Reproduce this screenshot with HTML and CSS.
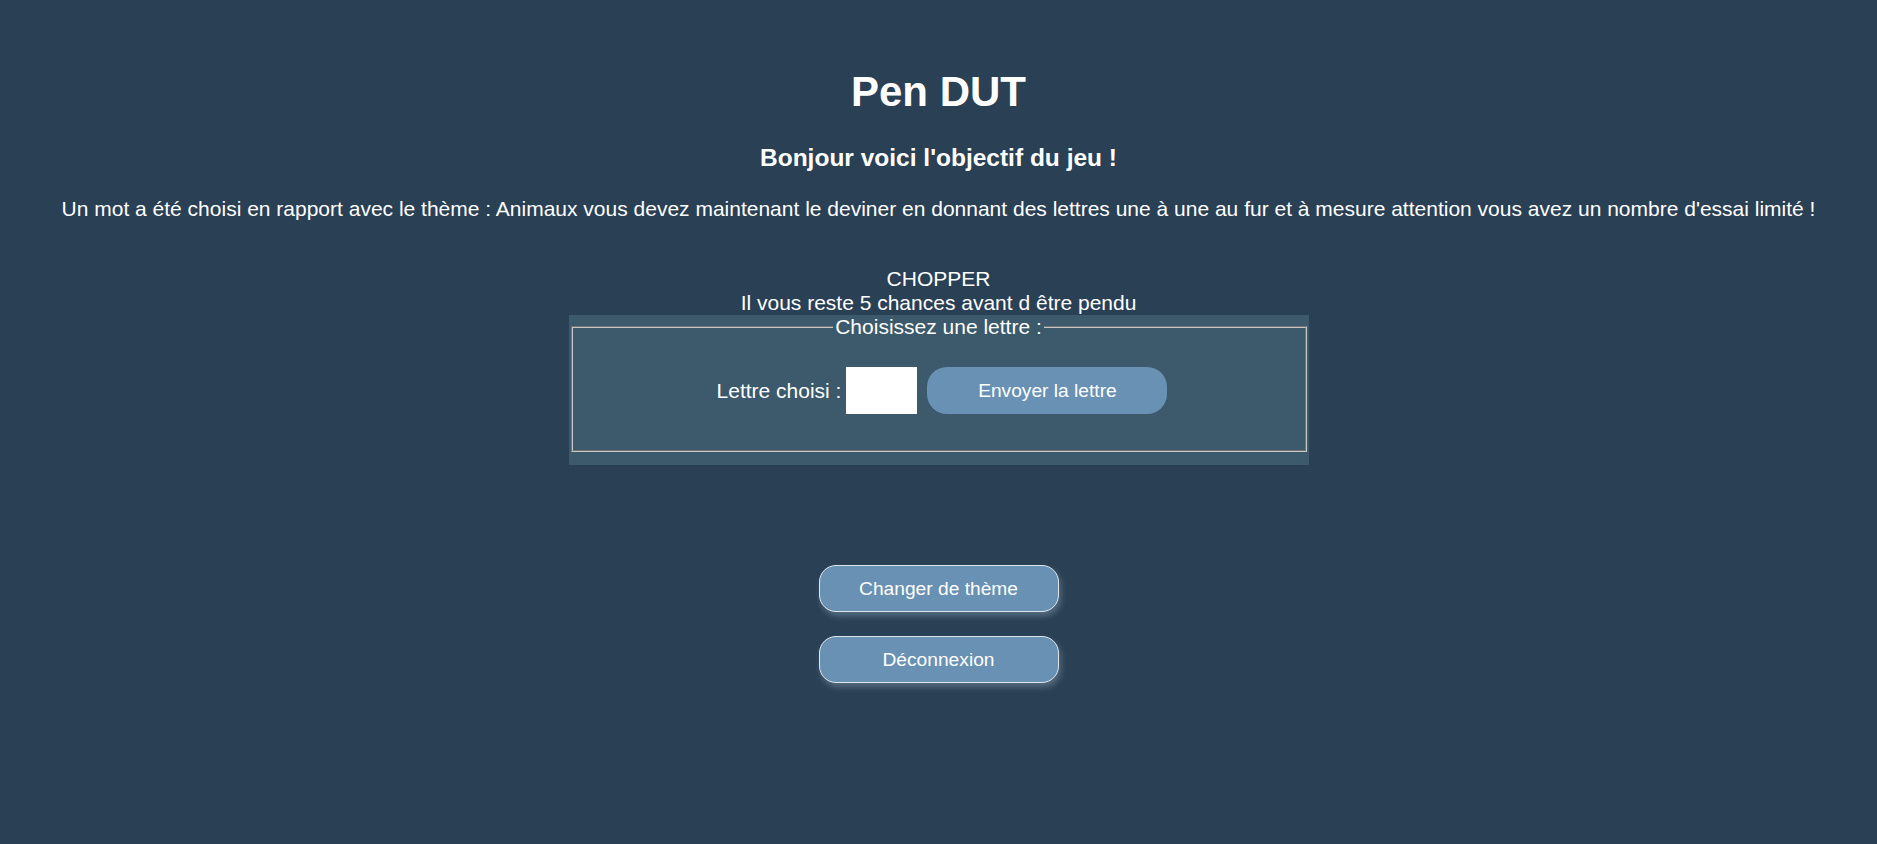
FILE: index.html
```html
<!DOCTYPE html>
<html lang="fr">
<head>
<meta charset="utf-8">
<title>Pen DUT</title>
<link rel="stylesheet" href="styles.css">
</head>
<body>
<main class="page">
  <h1 class="title">Pen DUT</h1>
  <h2 class="subtitle">Bonjour voici l'objectif du jeu !</h2>
  <p class="intro">Un mot a été choisi en rapport avec le thème : Animaux vous devez maintenant le deviner en donnant des lettres une à une au fur et à mesure attention vous avez un nombre d'essai limité !</p>
  <div class="status">
    <div class="word">CHOPPER</div>
    <div class="chances">Il vous reste 5 chances avant d être pendu</div>
  </div>
  <form class="panel">
    <fieldset class="fs">
      <legend class="legend">Choisissez une lettre :</legend>
      <div class="row">
        <label class="lbl" for="lettre">Lettre choisi :</label>
        <input class="letter" id="lettre" type="text" maxlength="1">
        <button class="send" type="button">Envoyer la lettre</button>
      </div>
    </fieldset>
  </form>
  <div class="actions">
    <button class="action" type="button">Changer de thème</button>
    <button class="action" type="button">Déconnexion</button>
  </div>
</main>
</body>
</html>
```
FILE: styles.css
```css
html, body {
  margin: 0;
  padding: 0;
}
body {
  background: #2a4055;
  color: #ffffff;
  font-family: "Liberation Sans", Arial, sans-serif;
  font-size: 21px;
  min-height: 844px;
}
.page {
  display: flex;
  flex-direction: column;
  align-items: center;
  text-align: center;
}
.title {
  margin: 68px 0 0;
  font-size: 42px;
  line-height: 48px;
  font-weight: bold;
}
.subtitle {
  margin: 28px 0 0;
  font-size: 24.5px;
  line-height: 28px;
  font-weight: bold;
}
.intro {
  margin: 25px 0 0;
  font-size: 21px;
  line-height: 24px;
}
.status {
  margin-top: 46px;
  line-height: 24px;
}
.panel {
  width: 740px;
  box-sizing: border-box;
  background: #3c5a6b;
  padding: 0 0 13px;
  margin: 0;
}
.fs {
  margin: 0 2px;
  padding: 28px 10px 36px;
  border: 2px groove #c8c8c8;
}
.legend {
  padding: 0 2px;
  line-height: 24px;
}
.row {
  display: flex;
  align-items: center;
  justify-content: center;
  padding-left: 7px;
}
.lbl {
  margin-right: 5px;
}
.letter {
  width: 71px;
  height: 47px;
  box-sizing: border-box;
  border: none;
  background: #ffffff;
  margin: 0 10px 0 0;
  padding: 0;
}
.send {
  width: 240px;
  height: 47px;
  border: none;
  border-radius: 20px;
  background: #6891b3;
  color: #ffffff;
  font-family: "Liberation Sans", Arial, sans-serif;
  font-size: 19.2px;
}
.actions {
  margin-top: 100px;
  display: flex;
  flex-direction: column;
  align-items: center;
  gap: 24px;
}
.action {
  width: 240px;
  height: 47px;
  border: 1px solid #dfe6ea;
  border-radius: 17px;
  background: #6891b3;
  color: #ffffff;
  font-family: "Liberation Sans", Arial, sans-serif;
  font-size: 19.2px;
  box-shadow: 2px 4px 6px rgba(170, 195, 210, 0.35);
}
```
